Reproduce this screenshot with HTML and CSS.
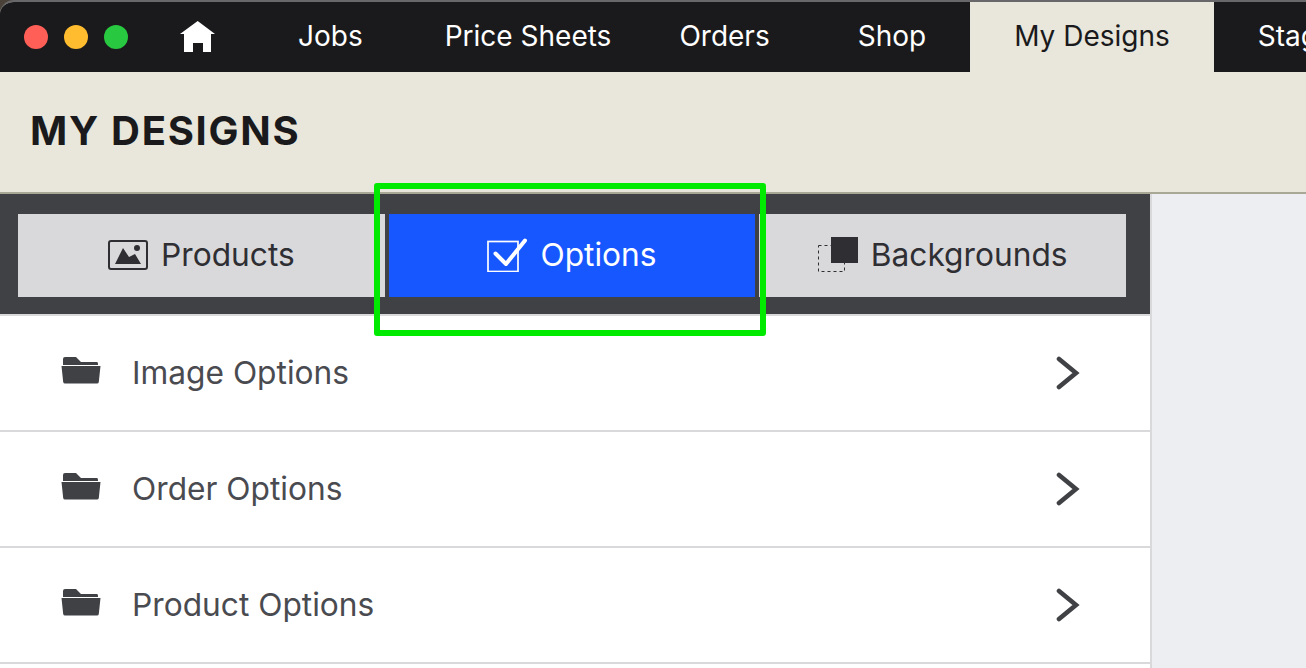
FILE: index.html
```html
<!DOCTYPE html>
<html lang="en">
<head>
  <meta charset="UTF-8">
  <title>My Designs</title>
  <link rel="stylesheet" href="styles.css">
</head>
<body>
  <div class="window">
    <!-- Top navigation -->
    <nav class="nav">
      <div class="traffic">
        <span class="dot dot-red"></span>
        <span class="dot dot-yellow"></span>
        <span class="dot dot-green"></span>
      </div>
      <a class="nav-home" href="#">
        <svg width="36" height="32" viewBox="0 0 36 32"><path d="M17.7 0 L35 13 L31 13 L31 31 L23 31 L23 22 L13 22 L13 31 L4 31 L4 13 L0 13 Z" fill="#fff"/></svg>
      </a>
      <a class="nav-item" href="#">Jobs</a>
      <a class="nav-item nav-price" href="#">Price Sheets</a>
      <a class="nav-item" href="#">Orders</a>
      <a class="nav-item" href="#">Shop</a>
      <a class="nav-item active" href="#">My Designs</a>
      <a class="nav-item" href="#">Stages</a>
    </nav>

    <header class="title-bar">
      <h1>MY DESIGNS</h1>
    </header>

    <div class="content">
      <main class="panel">
        <!-- Tabs -->
        <div class="tabs">
          <a class="tab" href="#">
            <svg width="40" height="30" viewBox="0 0 40 30">
              <rect x="1" y="1" width="38" height="28" rx="2" fill="none" stroke="#2e2e33" stroke-width="2"/>
              <path d="M7 24 L15 8 L21 17 L27 14 L33 24 Z" fill="#2e2e33"/>
              <circle cx="29" cy="8" r="3" fill="#2e2e33"/>
            </svg>
            Products
          </a>
          <a class="tab tab-active" href="#">
            <svg width="40" height="34" viewBox="0 0 40 34">
              <rect x="1" y="3.5" width="30" height="30" fill="none" stroke="#fff" stroke-width="1.7"/>
              <path d="M8.5 15.5 L19 26 L38 2.5" fill="none" stroke="#fff" stroke-width="4" stroke-linecap="round" stroke-linejoin="round"/>
            </svg>
            Options
          </a>
          <a class="tab" href="#">
            <svg width="40" height="35" viewBox="0 0 40 35">
              <rect x="0.5" y="8.5" width="26" height="26" fill="none" stroke="#2e2e33" stroke-width="1" stroke-dasharray="3 3"/>
              <rect x="13" y="0" width="27" height="26" fill="#2e2e33"/>
            </svg>
            Backgrounds
          </a>
        </div>

        <!-- Option folders -->
        <ul class="rows">
          <li class="row">
            <svg class="folder" width="40" height="28" viewBox="0 0 40 28"><path d="M2 9 L2 3 Q2 1 4 1 L15 1 L20 6 L36 6 Q37 6 37 8 L37 9 Z M0.5 10 L39.5 10 L37.8 26 Q37.6 27.5 36 27.5 L4 27.5 Q2.4 27.5 2.2 26 Z" fill="#404145"/></svg>
            <span class="row-label">Image Options</span>
            <svg class="chevron" width="24" height="34" viewBox="0 0 24 34"><path d="M3 3 L20 17 L3 31" fill="none" stroke="#404145" stroke-width="4.6" stroke-linecap="round" stroke-linejoin="miter"/></svg>
          </li>
          <li class="row">
            <svg class="folder" width="40" height="28" viewBox="0 0 40 28"><path d="M2 9 L2 3 Q2 1 4 1 L15 1 L20 6 L36 6 Q37 6 37 8 L37 9 Z M0.5 10 L39.5 10 L37.8 26 Q37.6 27.5 36 27.5 L4 27.5 Q2.4 27.5 2.2 26 Z" fill="#404145"/></svg>
            <span class="row-label">Order Options</span>
            <svg class="chevron" width="24" height="34" viewBox="0 0 24 34"><path d="M3 3 L20 17 L3 31" fill="none" stroke="#404145" stroke-width="4.6" stroke-linecap="round" stroke-linejoin="miter"/></svg>
          </li>
          <li class="row">
            <svg class="folder" width="40" height="28" viewBox="0 0 40 28"><path d="M2 9 L2 3 Q2 1 4 1 L15 1 L20 6 L36 6 Q37 6 37 8 L37 9 Z M0.5 10 L39.5 10 L37.8 26 Q37.6 27.5 36 27.5 L4 27.5 Q2.4 27.5 2.2 26 Z" fill="#404145"/></svg>
            <span class="row-label">Product Options</span>
            <svg class="chevron" width="24" height="34" viewBox="0 0 24 34"><path d="M3 3 L20 17 L3 31" fill="none" stroke="#404145" stroke-width="4.6" stroke-linecap="round" stroke-linejoin="miter"/></svg>
          </li>
        </ul>
      </main>
      <aside class="side"></aside>
    </div>

    <!-- Green highlight drawn over the Options tab -->
    <div class="highlight"></div>
  </div>
</body>
</html>
```

FILE: styles.css
```css
/* General Styles */
html, body {
  margin: 0;
  height: 100%;
  overflow: hidden;
}

body {
  font-family: Inter, "Liberation Sans", sans-serif;
  background-color: #4a4238;
}

a {
  text-decoration: none;
  color: inherit;
}

.window {
  position: relative;
  height: 666px;
  border-top: 2px solid #68686a;
  border-top-left-radius: 14px;
  overflow: hidden;
  background-color: #edeef1;
}

/* Top navigation */
.nav {
  display: flex;
  height: 70px;
  background-color: #1a1a1c;
  color: #fff;
  font-size: 28px;
  white-space: nowrap;
}

.traffic {
  display: flex;
  flex: none;
  align-items: center;
  gap: 16px;
  padding-left: 24px;
  margin-top: -1px;
}

.dot {
  width: 24px;
  height: 24px;
  border-radius: 50%;
}

.dot-red { background-color: #ff5f57; }
.dot-yellow { background-color: #febc2e; }
.dot-green { background-color: #28c840; }

.nav-home {
  display: flex;
  flex: none;
  align-items: center;
  padding-left: 52px;
  width: 74px;
  margin-top: -1px;
}

.nav-item {
  display: flex;
  flex: none;
  align-items: center;
  padding: 0 44px;
  margin-top: -2px;
}

.nav-price {
  padding: 0 24px 0 38px;
}

.nav-item.active {
  background-color: #e9e7db;
  color: #1a1a1c;
  margin-top: 0;
  padding: 0 44px 2px;
}

/* Title bar */
.title-bar {
  display: flex;
  align-items: center;
  height: 122px;
  padding: 0 0 3px 30px;
  box-sizing: border-box;
  background-color: #e9e7db;
  border-bottom: 2px solid #a9a795;
}

.title-bar h1 {
  margin: 0;
  font-size: 40px;
  font-weight: 700;
  letter-spacing: 1.7px;
  color: #1a1a1c;
}

/* Content */
.content {
  display: flex;
  height: 474px;
}

.panel {
  width: 1150px;
  background-color: #fff;
}

.side {
  flex: 1;
  border-left: 2px solid #d9d9dc;
  background-color: #edeef1;
}

/* Tabs */
.tabs {
  display: flex;
  gap: 4px;
  height: 83px;
  padding: 20px 24px 17px 18px;
  background-color: #404145;
  border-bottom: 2px solid #d9d9dc;
}

.tab {
  flex: 1;
  display: flex;
  align-items: center;
  justify-content: center;
  gap: 13px;
  padding-bottom: 2px;
  background-color: #d9d9dc;
  color: #2e2e33;
  font-size: 31.7px;
}

.tab-active {
  background-color: #1757ff;
  color: #fff;
}

/* Rows */
.rows {
  margin: 0;
  padding: 0;
  list-style: none;
}

.row {
  display: flex;
  align-items: center;
  height: 114px;
  padding: 0 70px 0 61px;
  border-bottom: 2px solid #d9d9dc;
  color: #4a4b50;
  font-size: 31.7px;
}

.folder {
  margin-right: 32px;
  margin-top: -6px;
}

.row-label {
  flex: 1;
  margin-left: -1px;
  padding-bottom: 2px;
}

/* Highlight */
.highlight {
  position: absolute;
  left: 374px;
  top: 181px;
  width: 380px;
  height: 141px;
  border: 6px solid #00ea00;
  border-radius: 3px;
}
```
